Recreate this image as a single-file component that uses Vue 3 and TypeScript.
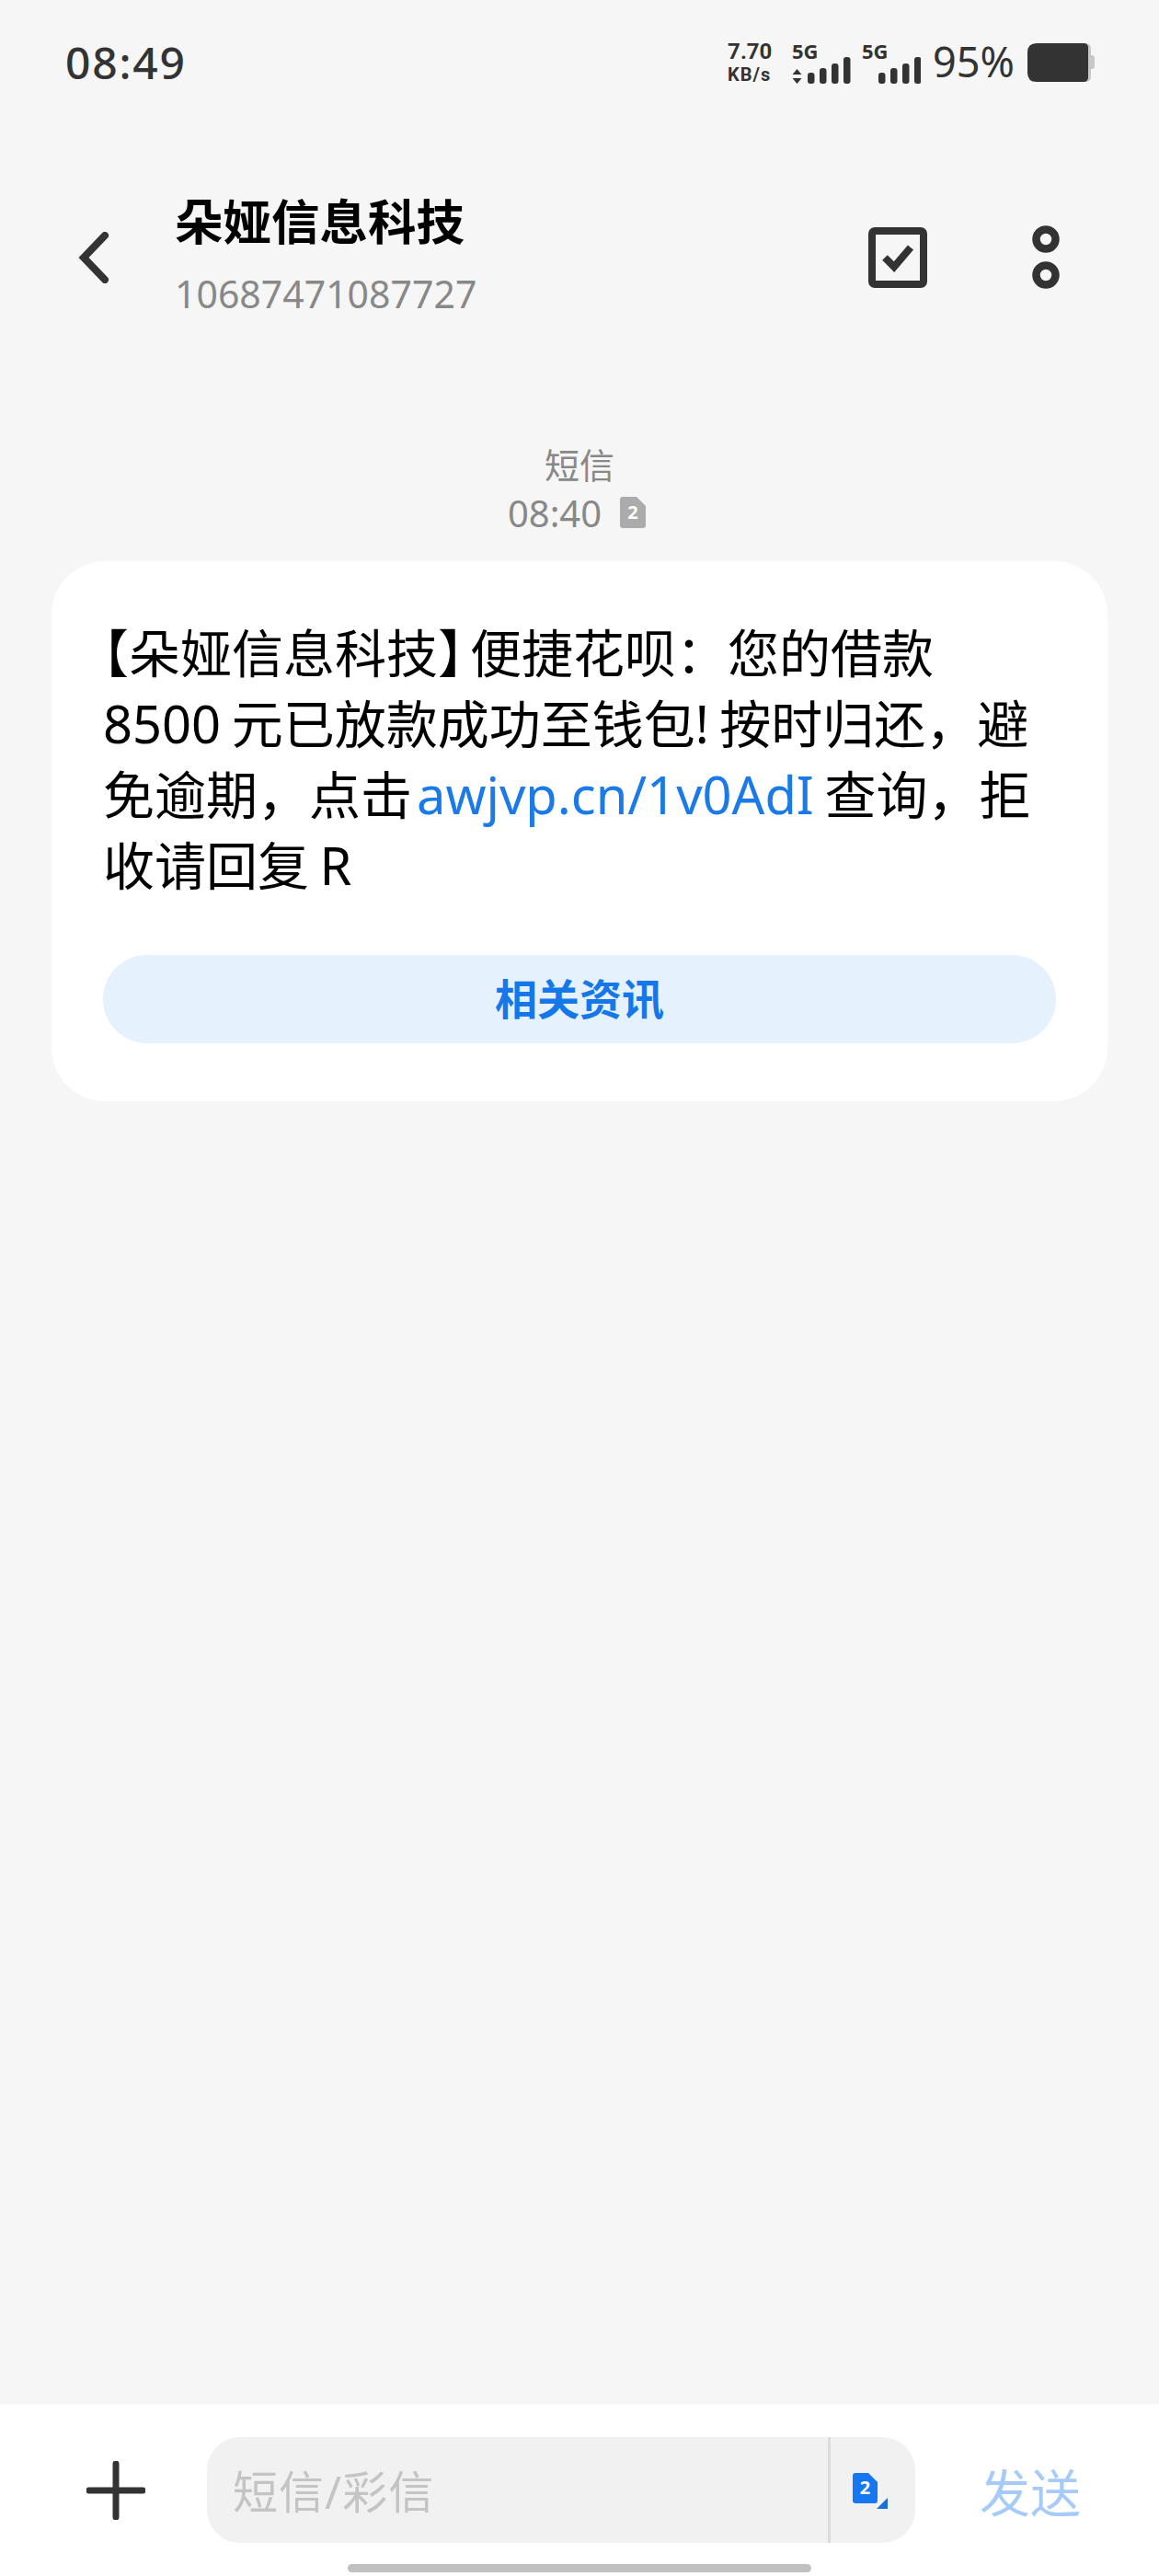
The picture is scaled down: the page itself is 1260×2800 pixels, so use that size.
<script setup lang="ts">
const signalBars = [
  { x: 17, y: 17, h: 12 },
  { x: 30, y: 12, h: 17 },
  { x: 43, y: 7, h: 22 },
  { x: 56, y: 0, h: 29 },
];
</script>

<template>
  <div class="phone">
    <div class="status">
      <span class="clock">08:49</span>
      <div class="status-right">
        <div class="speed">
          <span class="speed-num">7.70</span>
          <span class="speed-unit">KB/s</span>
        </div>
        <svg class="signal" width="64" height="64" viewBox="0 -35 64 64">
          <text x="0" y="2" class="net">5G</text>
          <path d="M5.500 13 L10.500 19 H0.500 Z M5.500 29 L10.500 23 H0.500 Z" fill="#333" />
          <rect v-for="b in signalBars" :key="b.x" :x="b.x" :y="b.y" width="7.500" :height="b.h" rx="3" fill="#333" />
        </svg>
        <svg class="signal" width="64" height="64" viewBox="0 -35 64 64">
          <text x="0" y="2" class="net">5G</text>
          <rect v-for="b in signalBars" :key="b.x" :x="b.x + 1" :y="b.y" width="7.500" :height="b.h" rx="3" fill="#333" />
        </svg>
        <span class="percent">95%</span>
        <svg width="73" height="42" viewBox="0 0 73 42">
          <path d="M60 0 H63 Q69 0 69 6 V13 H70 Q73 13 73 16 V25 Q73 28 70 28 H69 V36 Q69 42 63 42 H60 Z" fill="#c8c8c8" />
          <path d="M10 0 H61 Q66 0 66 5 V37 Q66 42 61 42 H10 Q0 42 0 32 V10 Q0 0 10 0 Z" fill="#333" />
        </svg>
      </div>
    </div>

    <header class="topbar">
      <svg width="34" height="56" viewBox="0 0 34 56">
        <path d="M29 4 L6 28 L29 52" fill="none" stroke="#333" stroke-width="8" stroke-linecap="round" stroke-linejoin="miter" />
      </svg>
      <div class="contact">
        <div class="name">朵娅信息科技</div>
        <div class="number">10687471087727</div>
      </div>
      <svg width="64" height="66" viewBox="0 0 64 66">
        <rect x="4" y="4" width="56" height="58" rx="3" fill="none" stroke="#333" stroke-width="8" />
        <path d="M18 33 L28 43 L46 22" fill="none" stroke="#333" stroke-width="8" />
      </svg>
      <svg class="more" width="30" height="70" viewBox="0 0 30 70">
        <circle cx="15" cy="15" r="10.500" fill="none" stroke="#333" stroke-width="8.500" />
        <circle cx="15" cy="54" r="10.500" fill="none" stroke="#333" stroke-width="8.500" />
      </svg>
    </header>

    <main class="thread">
      <div class="meta">
        <div class="meta-type">短信</div>
        <div class="meta-time">
          <span>08:40</span>
          <svg width="28" height="34" viewBox="0 0 28 34">
            <path d="M3 0 H18 L28 10 V31 Q28 34 25 34 H3 Q0 34 0 31 V3 Q0 0 3 0 Z" fill="#ababab" />
            <text x="14" y="24" text-anchor="middle" class="sim">2</text>
          </svg>
        </div>
      </div>

      <div class="bubble">
        <p class="body">
          <span class="halt">【</span>朵娅信息科技<span class="halt close">】</span>便捷花呗：您的借款<br />
          8500 元已放款成功至钱包! 按时归还，避<br />
          免逾期，点击<a class="link">awjvp.cn/1v0AdI</a> 查询，拒<br />
          收请回复 R
        </p>
        <button class="action">相关资讯</button>
      </div>
    </main>

    <footer class="composer">
      <div class="composer-row">
        <svg width="64" height="64" viewBox="0 0 64 64">
          <path d="M32 3 V61 M3 32 H61" stroke="#333" stroke-width="7" stroke-linecap="round" />
        </svg>
        <div class="input">
          <span class="placeholder">短信/彩信</span>
          <div class="sim-switch">
            <svg width="40" height="40" viewBox="0 0 40 40">
              <path d="M3 0 H17 L27 10 V30 Q27 33 24 33 H3 Q0 33 0 30 V3 Q0 0 3 0 Z" fill="#1677f2" />
              <text x="13.500" y="23" text-anchor="middle" class="sim">2</text>
              <path d="M38 27 V39 H26 Z" fill="#1a6fdc" />
            </svg>
          </div>
        </div>
        <span class="send">发送</span>
      </div>
      <div class="home-bar"></div>
    </footer>
  </div>
</template>

<style>
html,
body {
  margin: 0;
  background: #f6f6f6;
}
</style>

<style scoped>
.phone {
  width: 1260px;
  height: 2800px;
  display: flex;
  flex-direction: column;
  overflow: hidden;
  background: #f6f6f6;
  font-family: "Noto Sans", "Noto Sans CJK SC", sans-serif;
  color: #000;
}

.status {
  height: 120px;
  padding: 0 70px 0 71px;
  display: flex;
  justify-content: space-between;
  align-items: flex-start;
  box-sizing: border-box;
}

.clock {
  margin-top: 33px;
  font-size: 48px;
  line-height: 70px;
  font-weight: 500;
  letter-spacing: 1.800px;
  color: #333;
}

.status-right {
  display: flex;
  align-items: flex-start;
  padding-top: 47px;
}

.speed {
  width: 49px;
  margin: -4px 21px 0 0;
  display: flex;
  flex-direction: column;
  font-family: Roboto, sans-serif;
  font-weight: 700;
  color: #333;
  white-space: nowrap;
}

.speed-num {
  font-size: 24px;
  line-height: 26px;
}

.speed-unit {
  font-size: 20px;
  line-height: 24px;
  letter-spacing: 1px;
}

.signal {
  margin: -20px 12px 0 0;
}

.net {
  font-family: "Noto Sans", sans-serif;
  font-size: 22px;
  font-weight: 700;
  fill: #333;
}

.percent {
  margin: -10px 14px 0 1px;
  font-size: 45px;
  line-height: 60px;
  color: #333;
}

.topbar {
  height: 320px;
  display: flex;
  align-items: center;
  padding-left: 85px;
}

.contact {
  margin: 0 0 7px 71px;
  width: 754px;
}

.name {
  font-size: 52.500px;
  line-height: 70px;
  font-weight: 700;
}

.number {
  margin-top: 15px;
  font-size: 41px;
  line-height: 56px;
  color: #888;
}

.more {
  margin-left: 114px;
}

.thread {
  flex: 1;
  padding: 0 56px;
}

.meta {
  padding-top: 40px;
  text-align: center;
  color: #888;
}

.meta-type {
  font-size: 38px;
  line-height: 50px;
}

.meta-time {
  display: flex;
  justify-content: center;
  align-items: center;
  gap: 20px;
  height: 54px;
  font-size: 40px;
  padding-right: 6px;
}

.sim {
  font-family: "Noto Sans", sans-serif;
  font-size: 20px;
  font-weight: 700;
  fill: #fff;
}

.bubble {
  margin-top: 26px;
  height: 587px;
  box-sizing: border-box;
  padding: 61px 56px 0;
  background: #fff;
  border-radius: 58px;
}

.body {
  margin: 0;
  font-size: 56px;
  line-height: 77px;
  white-space: nowrap;
  word-spacing: -3px;
}

.halt {
  font-feature-settings: "halt";
}

.close {
  margin-right: 7px;
}

.link {
  margin-left: 5px;
  color: #1a7ae8;
}

.action {
  display: block;
  width: 1036px;
  height: 96px;
  margin-top: 59px;
  padding: 0 0 6px;
  border: none;
  border-radius: 48px;
  background: #e5f1fd;
  color: #1677e8;
  font-family: inherit;
  font-size: 46px;
  font-weight: 700;
}

.composer {
  height: 187px;
  background: #fff;
}

.composer-row {
  display: flex;
  align-items: center;
  padding: 36px 0 0 94px;
}

.input {
  width: 770px;
  height: 115px;
  margin-left: 67px;
  display: flex;
  justify-content: space-between;
  box-sizing: border-box;
  background: #f1f1f1;
  border-radius: 36px;
  padding-left: 28px;
}

.placeholder {
  padding-top: 3px;
  font-size: 49px;
  line-height: 112px;
  letter-spacing: 1px;
  color: #c4c4c4;
}

.sim-switch {
  width: 95px;
  box-sizing: border-box;
  border-left: 3px solid #dcdcdc;
  padding: 39px 0 0 24px;
}

.send {
  margin: 4px 0 0 70px;
  font-size: 55px;
  line-height: 70px;
  color: #a6cbf8;
}

.home-bar {
  width: 504px;
  height: 9px;
  margin: 23px auto 0;
  border-radius: 5px;
  background: #c0c0c0;
}
</style>
